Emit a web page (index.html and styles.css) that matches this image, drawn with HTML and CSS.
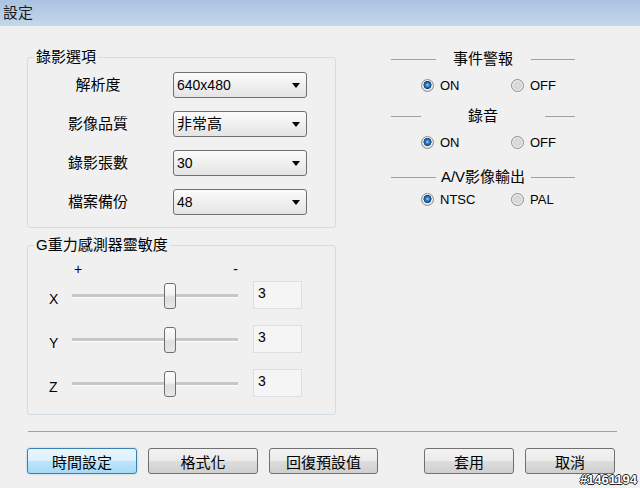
FILE: index.html
```html
<!DOCTYPE html>
<html lang="zh-Hant">
<head>
    <meta charset="UTF-8">
    <title>設定</title>
    <link rel="stylesheet" href="styles.css">
</head>
<body>
    <div class="titlebar">設定</div>

    <div class="content">
        <!-- Left column: group boxes -->
        <div class="left">
            <fieldset class="group">
                <legend>錄影選項</legend>
                <div class="form">
                    <span class="form-label">解析度</span>
                    <div class="combo"><span class="latin">640x480</span><svg width="8" height="5" viewBox="0 0 8 5"><polygon points="0,0 8,0 4,5" fill="#000"/></svg></div>

                    <span class="form-label">影像品質</span>
                    <div class="combo"><span>非常高</span><svg width="8" height="5" viewBox="0 0 8 5"><polygon points="0,0 8,0 4,5" fill="#000"/></svg></div>

                    <span class="form-label">錄影張數</span>
                    <div class="combo"><span class="latin">30</span><svg width="8" height="5" viewBox="0 0 8 5"><polygon points="0,0 8,0 4,5" fill="#000"/></svg></div>

                    <span class="form-label">檔案備份</span>
                    <div class="combo"><span class="latin">48</span><svg width="8" height="5" viewBox="0 0 8 5"><polygon points="0,0 8,0 4,5" fill="#000"/></svg></div>
                </div>
            </fieldset>

            <fieldset class="group">
                <legend>G重力感測器靈敏度</legend>
                <div class="sliders">
                    <div class="slider-row slider-scale">
                        <span></span>
                        <div class="scale"><span>+</span><span>-</span></div>
                    </div>
                    <div class="slider-row">
                        <span class="axis">X</span>
                        <div class="track"><span class="thumb"></span></div>
                        <div class="value">3</div>
                    </div>
                    <div class="slider-row">
                        <span class="axis">Y</span>
                        <div class="track"><span class="thumb"></span></div>
                        <div class="value">3</div>
                    </div>
                    <div class="slider-row">
                        <span class="axis">Z</span>
                        <div class="track"><span class="thumb"></span></div>
                        <div class="value">3</div>
                    </div>
                </div>
            </fieldset>
        </div>

        <!-- Right column: radio options -->
        <div class="right">
            <div class="opt">
                <div class="opt-head"><span class="rule"></span><span class="opt-title">事件警報</span><span class="rule"></span></div>
                <div class="radios">
                    <label class="choice"><span class="radio is-on"></span>ON</label>
                    <label class="choice"><span class="radio"></span>OFF</label>
                </div>
            </div>
            <div class="opt">
                <div class="opt-head"><span class="rule"></span><span class="opt-title opt-title--wide">錄音</span><span class="rule"></span></div>
                <div class="radios">
                    <label class="choice"><span class="radio is-on"></span>ON</label>
                    <label class="choice"><span class="radio"></span>OFF</label>
                </div>
            </div>
            <div class="opt opt--tight">
                <div class="opt-head"><span class="rule"></span><span class="opt-title">A/V影像輸出</span><span class="rule"></span></div>
                <div class="radios">
                    <label class="choice"><span class="radio is-on"></span>NTSC</label>
                    <label class="choice"><span class="radio"></span>PAL</label>
                </div>
            </div>
        </div>
    </div>

    <div class="sep"></div>

    <div class="actions">
        <button class="btn btn--default">時間設定</button>
        <button class="btn">格式化</button>
        <button class="btn btn--narrow">回復預設值</button>
        <button class="btn btn--short btn--push">套用</button>
        <button class="btn btn--short">取消</button>
    </div>

    <div class="watermark">#1461194</div>
</body>
</html>
```

FILE: styles.css
```css
* {
    box-sizing: border-box;
}

body {
    margin: 0;
    width: 640px;
    height: 488px;
    overflow: hidden;
    position: relative;
    background: #f0f0f0;
    color: #000;
    font-family: "Liberation Sans", "Noto Sans CJK TC", sans-serif;
    font-size: 15px;
}

.titlebar {
    height: 26px;
    line-height: 25px;
    padding-left: 3px;
    color: #1b1b1b;
    background: linear-gradient(#aac3e0, #c4d7ec);
}

.content {
    display: flex;
    padding: 23px 0 0 27px;
}

/* group boxes */
.left {
    width: 309px;
    display: flex;
    flex-direction: column;
    gap: 9px;
}

.group {
    margin: 0;
    min-width: 0;
    padding: 0;
    border: 1px solid #d5dde4;
    border-radius: 3px;
}

.group legend {
    margin-left: 6px;
    padding: 0 2px;
    line-height: 16px;
    font-size: 15px;
}

.form {
    display: grid;
    grid-template-columns: 140px 134px;
    column-gap: 5px;
    row-gap: 13px;
    padding: 7px 0 12px 0;
}

.form-label {
    align-self: center;
    text-align: center;
    line-height: 18px;
}

.combo {
    height: 26px;
    display: flex;
    align-items: center;
    justify-content: space-between;
    padding: 0 6px 0 3px;
    border: 1px solid #707070;
    border-radius: 3px;
    background: linear-gradient(#fbfbfb, #e4e4e4);
    line-height: 18px;
}

.latin {
    font-size: 14px;
}

/* sliders */
.sliders {
    display: flex;
    flex-direction: column;
    gap: 16px;
    padding: 9px 0 17px 21px;
}

.slider-row {
    display: grid;
    grid-template-columns: 23px 166px 64px;
    height: 28px;
}

.slider-row .value {
    margin-left: 15px;
}

.slider-scale {
    height: 14px;
    margin-bottom: -11px;
}

.scale {
    display: flex;
    justify-content: space-between;
    padding-left: 2px;
    font-size: 14px;
    line-height: 14px;
}

.axis {
    align-self: center;
    margin-top: 8px;
    font-size: 14px;
    line-height: 16px;
}

.track {
    position: relative;
}

.track::before {
    content: "";
    position: absolute;
    left: 0;
    right: 0;
    top: 13px;
    height: 3px;
    background: #c6c6c6;
    border-bottom: 1px solid #fff;
}

.thumb {
    position: absolute;
    left: 92px;
    top: 2px;
    width: 12px;
    height: 26px;
    border: 1px solid #6f6f6f;
    border-radius: 3px;
    background: linear-gradient(#fcfcfc 0, #f1f1f1 45%, #dedede 55%, #e8e8e8 100%);
}

.value {
    width: 49px;
    height: 28px;
    padding: 3px 0 0 4px;
    border: 1px solid #dadfe4;
    background: #f5f5f5;
    font-size: 14px;
    line-height: 16px;
}

/* radio options */
.right {
    width: 184px;
    margin-left: 55px;
    padding-top: 1px;
}

.opt {
    display: flex;
    flex-direction: column;
    gap: 8px;
}

.opt + .opt {
    margin-top: 13px;
}

.opt + .opt--tight {
    margin-top: 17px;
    gap: 4px;
}

.opt-head {
    display: flex;
    align-items: center;
    height: 18px;
}

.rule {
    flex: 1;
    height: 1px;
    background: #a0a0a0;
}

.opt-title {
    width: 95px;
    text-align: center;
    line-height: 18px;
}

.opt-title--wide {
    width: 124px;
}

.radios {
    display: grid;
    grid-template-columns: 90px auto;
    padding-left: 30px;
    height: 18px;
}

.choice {
    display: flex;
    align-items: center;
    gap: 6px;
    font-size: 13px;
}

.radio {
    width: 13px;
    height: 13px;
    border-radius: 50%;
    border: 1px solid #8e9091;
    background: radial-gradient(circle, #e2e2e2 0, #d4d4d4 3px, #f4f4f4 6px);
}

.radio.is-on {
    background: radial-gradient(circle at 50% 45%, #a9dcfb 0, #3a8ad0 1.5px, #1d5d9e 3px, #173f6e 3.8px, #f2f2f2 4.3px, #d6d6d6 6px);
}

/* footer */
.sep {
    width: 589px;
    margin: 16px 0 0 28px;
    border-top: 1px solid #a0a0a0;
}

.actions {
    display: flex;
    gap: 11px;
    margin: 16px 0 0 27px;
}

.btn {
    width: 110px;
    height: 26px;
    padding: 0;
    border: 1px solid #707070;
    border-radius: 3px;
    background: linear-gradient(#f2f2f2 0, #ebebeb 50%, #dddddd 50%, #cfcfcf 100%);
    font-family: inherit;
    font-size: 15px;
    color: #000;
}

.btn--default {
    border-color: #3c7fb1;
    background: linear-gradient(#eaf6fd 0, #d9f0fc 50%, #bee6fd 50%, #a7d9f5 100%);
    box-shadow: 0 0 2px #8fc3e8;
}

.btn--narrow {
    width: 109px;
}

.btn--short {
    width: 90px;
}

.btn--push {
    margin-left: 35px;
}

.watermark {
    position: absolute;
    right: 3px;
    bottom: 1px;
    font-size: 13px;
    font-weight: bold;
    color: #fff;
    text-shadow: 1px 0 0 #222, -1px 0 0 #222, 0 1px 0 #222, 0 -1px 0 #222;
}
```
